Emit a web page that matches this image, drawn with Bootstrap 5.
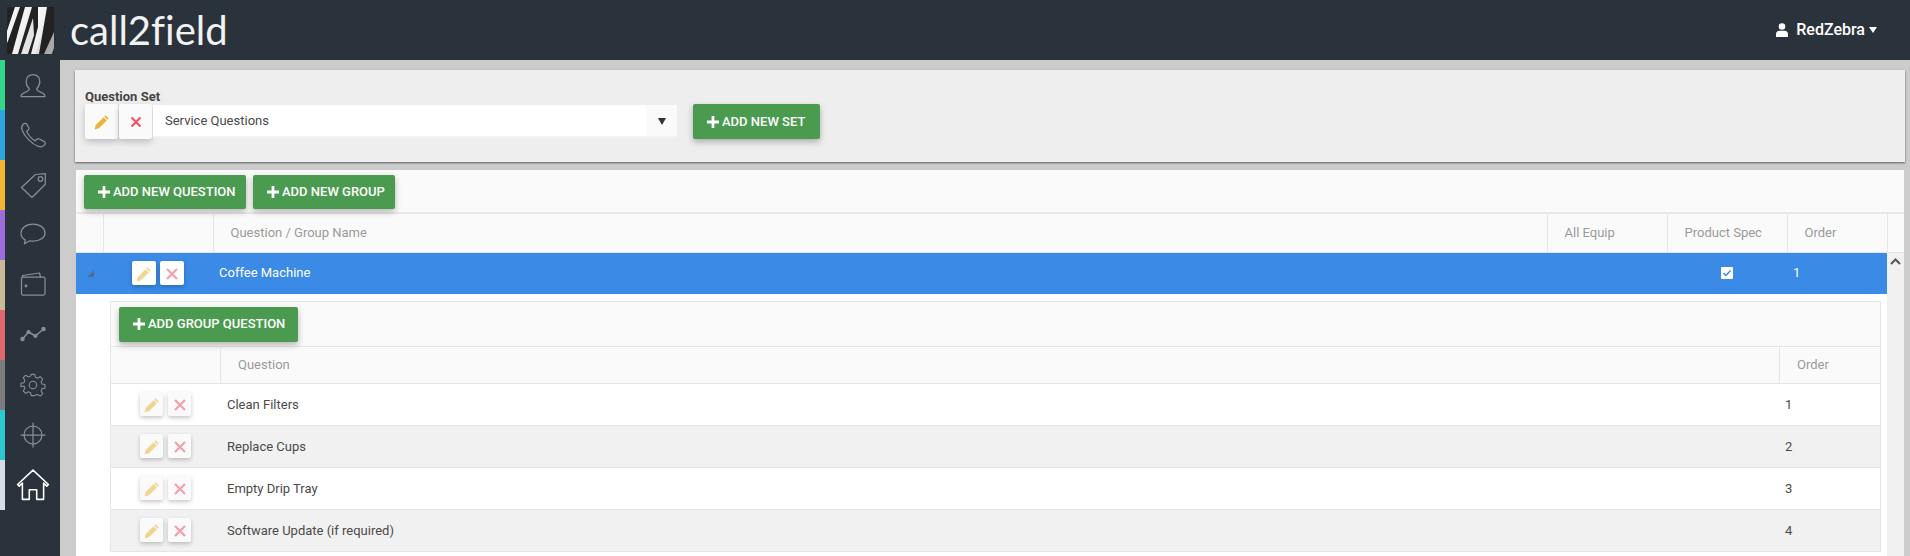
<!DOCTYPE html>
<html lang="en">
<head>
<meta charset="utf-8">
<title>call2field</title>
<link href="https://cdn.jsdelivr.net/npm/bootstrap@5.3.0/dist/css/bootstrap.min.css" rel="stylesheet">
<style>
html,body{height:556px;overflow:hidden;}
body{background:#ccc;font-family:Roboto,"Liberation Sans",sans-serif;font-size:13px;color:#4a4a4a;}
.topbar{height:60px;background:#2a323b;padding-left:7px;padding-right:33px;}
.brandmark{width:47px;height:47px;display:block;}
.brandname{font-family:Lato,"Noto Sans",sans-serif;font-weight:400;font-size:40px;line-height:60px;color:#f2f2f2;margin-left:16px;font-variant-ligatures:none;}
.usermenu{color:#fff;font-size:16px;font-weight:500;}
.usermenu .tri{width:0;height:0;border-style:solid;border-width:6px 4px 0;border-color:#fff transparent transparent;margin-left:4px;}
.shell{height:496px;}
.sidenav{width:60px;background:#2a323b;flex:none;}
.sideitem{height:50px;border-left:5px solid;}
.sideitem svg{width:32px;height:32px;fill:none;stroke:#878e96;stroke-width:1.25;stroke-linejoin:round;stroke-linecap:round;}
.sideitem.current svg{width:34px;height:34px;stroke:#fff;stroke-width:1.5;}
.mainarea{padding:10px 5px 0 15px;min-width:0;}
.setpanel{height:92px;background:#eee;box-shadow:0 1px 2px rgba(0,0,0,.55);padding:19px 10px 0;margin-bottom:8px;}
.setlabel{font-size:13px;font-weight:700;line-height:15px;color:#444;}
.iconbtn{width:33px;height:35px;background:#fafafa;border:0;border-radius:2px;padding:0;box-shadow:0 3px 6px rgba(0,0,0,.2);margin-right:1px;}
.iconbtn svg{width:16px;height:16px;}
.setpick{width:524px;height:33px;background:#fff;border-bottom:2px solid #f2f2f2;margin-top:1px;font-size:13px;}
.setpick .val{padding:1px 0 0 12px;}
.setpick .arr{width:31px;background:#fafafa;padding-top:1px;}
.setpick .arr i{border-style:solid;border-width:7px 4px 0;border-color:#333 transparent transparent;}
.greenbtn{background:#4a9b4f;color:#fff;border:0;border-radius:2px;font-size:13px;font-weight:500;height:35px;padding:0 0 0 14px;text-align:left;box-shadow:0 3px 6px rgba(0,0,0,.28);white-space:nowrap;}
.greenbtn svg{width:12px;height:12px;fill:#fff;margin-right:3px;vertical-align:-2px;}
.btnset{width:127px;margin-left:16px;}
.btnquestion{width:162px;height:34px;}
.btngroup{width:142px;height:34px;}
.btngroupq{width:179px;}
.gridwrap{width:1828px;margin-left:1px;height:386px;background:#fff;overflow:hidden;}
.gridtools{height:44px;background:#fafafa;padding:5px 8px 0;gap:7px;border-bottom:2px solid #e8e8e8;}
table.datagrid{table-layout:fixed;border-collapse:collapse;width:100%;}
table.datagrid th{background:#fafafa;color:#9a9a9a;font-weight:400;font-size:13px;height:38px;padding:0 0 0 17px;border-right:1px solid #e6e6e6;border-bottom:1px solid #e6e6e6;}
table.datagrid th.nopad{padding:0;}
table.datagrid th:last-child{border-right:0;}
.gridbody{position:relative;height:303px;}
.bluerow{height:41px;background:#3a8ae6;color:#fff;width:1811px;}
.expander{width:27px;flex:none;}
.expander i{display:block;width:0;height:0;border-style:solid;border-width:0 0 7px 7px;border-color:transparent transparent #4f6f98 transparent;margin-left:11px;}
.rowbtns{gap:4px;}
.bluebtns{width:110px;padding-left:29px;}
.bluename{padding-left:6px;}
.minibtn{width:24px;height:24px;background:#fff;border:0;border-radius:2px;padding:0;box-shadow:0 2px 4px rgba(0,0,0,.22);}
.minibtn svg{width:16px;height:16px;opacity:.55;}
.subgrid .minibtn{background:#fafafa;width:23px;}
.subgrid .rowbtns{gap:5px;}
.scrolltrack{position:absolute;top:0;right:0;width:17px;height:303px;background:#f1f1f1;}
.scrolltrack svg{display:block;margin:5px auto 0;width:11px;height:7px;}
.subgrid{margin:7px 0 0 34px;width:1771px;border:1px solid #e6e6e6;border-bottom:0;}
.subtools{height:45px;background:#fafafa;padding:5px 8px 0;border-bottom:1px solid #e6e6e6;}
.subhead{height:37px;background:#fafafa;color:#9a9a9a;border-bottom:1px solid #e6e6e6;}
.subrow{height:42px;border-bottom:1px solid #e6e6e6;background:#fff;}
.subrow.alt{background:#f1f1f1;}
.subrow .colq,.subrow .colord{padding-top:1px;}
.colbtn{width:110px;padding-left:29px;flex:none;}
.subhead .colbtn{border-right:1px solid #e6e6e6;height:100%;}
.colq{flex:1 1 0;padding-left:6px;}
.subhead .colq{padding-left:17px;}
.colord{width:101px;flex:none;padding-left:6px;}
.subhead .colord{height:100%;border-left:1px solid #e6e6e6;padding-left:17px;}
.checkmini{width:12px;height:12px;background:#fff;border-radius:1px;}
.ordmain{width:100px;flex:none;padding-left:6px;}
.prodcell{width:120px;flex:none;}
</style>
</head>
<body>
<nav class="topbar d-flex align-items-center">
  <svg class="brandmark" viewBox="0 0 47 47" aria-label="logo">
    <defs><linearGradient id="zs" x1="0" y1="0" x2="1" y2="1"><stop offset="0" stop-color="#fff"/><stop offset=".6" stop-color="#eee"/><stop offset="1" stop-color="#9a9a9a"/></linearGradient></defs>
    <rect width="47" height="47" fill="#242122"/>
    <polygon points="8,0 13,0 1,34 0,36 0,24" fill="url(#zs)"/>
    <polygon points="18,0 25,0 11,47 5,47" fill="url(#zs)"/>
    <polygon points="26,11 27,28 21,47 14,47" fill="#e4e4e4"/>
    <polygon points="31,0 40,0 32,47 24,47 31,20" fill="url(#zs)"/>
    <polygon points="47,25 47,41 45,47 37,47" fill="#a9a9a9"/>
  </svg>
  <span class="brandname">call2field</span>
  <div class="usermenu ms-auto d-flex align-items-center">
    <svg width="12" height="14" viewBox="0 0 12 14" class="me-1" fill="#fff"><circle cx="6" cy="3.500" r="3.300"/><path d="M0 14v-3c0-2 1.500-3.300 3.200-3.300h5.600C10.500 7.700 12 9 12 11v3z"/></svg>
    <span class="ms-1">RedZebra</span><span class="tri d-inline-block"></span>
  </div>
</nav>
<div class="shell d-flex">
  <aside class="sidenav">
    <div class="sideitem d-flex align-items-center justify-content-center" style="border-color:#33d68b"><svg viewBox="0 0 32 32"><path d="M4 27.500c0-2.600 1.500-3.300 4-4.200 2.700-.9 4.300-1.700 4.300-3.600-2-1.800-3.100-4.200-3.100-7.200 0-4 2.700-7 6.800-7s6.800 3 6.800 7c0 3-1.100 5.400-3.100 7.200 0 1.900 1.600 2.700 4.300 3.600 2.500.9 4 1.600 4 4.200z"/></svg></div>
    <div class="sideitem d-flex align-items-center justify-content-center" style="border-color:#2ca5dc"><svg viewBox="0 0 32 32"><path d="M6 5.500c1.500-1.500 3-1.500 3.800-.2l2 3.200c.5.900.3 1.800-.6 2.500l-1.500 1.200c1 3.300 5.700 8.600 8.600 9.600l1.500-1.500c.8-.8 1.800-.9 2.600-.3l5 2.600c1.200.9 1.100 2.300-.1 3.500-1.700 1.700-3.700 2.100-6 1.300C15.200 25.200 7.500 17.500 5.200 11.200c-.8-2.400-1.100-3.800.8-5.700z"/></svg></div>
    <div class="sideitem d-flex align-items-center justify-content-center" style="border-color:#f2b632"><svg viewBox="0 0 32 32"><path d="M4.500 18.500 18.500 5.500l9.800-.8v10.600L15 28.500z"/><circle cx="23.500" cy="10" r="2.300"/></svg></div>
    <div class="sideitem d-flex align-items-center justify-content-center" style="border-color:#9c6ddb"><svg viewBox="0 0 32 32"><path d="M16 5C8.800 5 4 9 4 14.200c0 3.300 1.900 5.500 4.300 6.800l-.9 3.800 5.400-3c1 .2 2.100.3 3.200.3 7.200 0 12-3.700 12-7.900C28 9 23.200 5 16 5z"/></svg></div>
    <div class="sideitem d-flex align-items-center justify-content-center" style="border-color:#c9bb96"><svg viewBox="0 0 32 32"><path d="M5.500 8v-1.500l17-2.500 1 4"/><rect x="4.500" y="8" width="23.500" height="18" rx="1.500"/><circle cx="9" cy="17" r=".8" fill="#878e96"/></svg></div>
    <div class="sideitem d-flex align-items-center justify-content-center" style="border-color:#e0666f"><svg viewBox="0 0 32 32" style="stroke-width:1.500"><path d="M5.500 20 11.500 13 18.500 17 26.500 10"/><g fill="#878e96"><circle cx="5.500" cy="20" r="1.500"/><circle cx="11.500" cy="13" r="1.300"/><circle cx="18.500" cy="17" r="1.300"/><circle cx="26.500" cy="10" r="1.500"/></g></svg></div>
    <div class="sideitem d-flex align-items-center justify-content-center" style="border-color:#7d7d7d"><svg viewBox="-2 -2 36 36"><path d="M14 4h4l.7 3.400 2.500 1 3-1.900 2.800 2.800-1.900 3 1 2.500 3.400.7v4l-3.400.7-1 2.500 1.900 3-2.800 2.800-3-1.900-2.500 1L18 28h-4l-.7-3.400-2.500-1-3 1.900-2.800-2.800 1.900-3-1-2.500L2.500 18v-4l3.400-.7 1-2.500-1.900-3 2.800-2.800 3 1.900 2.500-1z"/><circle cx="16" cy="16" r="4.200"/></svg></div>
    <div class="sideitem d-flex align-items-center justify-content-center" style="border-color:#2bc8d2"><svg viewBox="0 0 32 32"><circle cx="16" cy="16" r="9"/><path d="M16 4v24M4 16h24"/></svg></div>
    <div class="sideitem current d-flex align-items-center justify-content-center" style="border-color:#d5dde5"><svg viewBox="0 0 32 32"><path d="M1.500 15.500 16 2l14.500 13.500-1.500 1.500L26 14.200V29.500h-6.500v-9h-7v9H6V14.200L3 17z"/></svg></div>
  </aside>
  <main class="mainarea flex-grow-1">
    <section class="setpanel">
      <div class="setlabel">Question Set</div>
      <div class="d-flex align-items-start">
        <button class="iconbtn" aria-label="Edit"><svg viewBox="0 0 16 16"><path fill="#e9b63d" d="M11.600 1.200l3.200 3.200-1.300 1.300-3.200-3.200zM9.600 3.200l3.200 3.200-7.900 7.900L.6 15.400l1.100-4.300z"/></svg></button>
        <button class="iconbtn" aria-label="Delete"><svg viewBox="0 0 16 16"><path fill="none" stroke="#e85a6e" stroke-width="2.400" d="M3.500 3.500l9 9M12.500 3.500l-9 9"/></svg></button>
        <div class="setpick d-flex align-items-stretch"><div class="val flex-grow-1 d-flex align-items-center">Service Questions</div><div class="arr d-flex align-items-center justify-content-center"><i class="d-block"></i></div></div>
        <button class="greenbtn btnset"><svg viewBox="0 0 13 13"><path d="M5 0h3v5h5v3H8v5H5V8H0V5h5z"/></svg>ADD NEW SET</button>
      </div>
    </section>
    <section class="gridwrap">
      <div class="gridtools d-flex">
        <button class="greenbtn btnquestion"><svg viewBox="0 0 13 13"><path d="M5 0h3v5h5v3H8v5H5V8H0V5h5z"/></svg>ADD NEW QUESTION</button>
        <button class="greenbtn btngroup"><svg viewBox="0 0 13 13"><path d="M5 0h3v5h5v3H8v5H5V8H0V5h5z"/></svg>ADD NEW GROUP</button>
      </div>
      <table class="datagrid">
        <colgroup><col style="width:27px"><col style="width:110px"><col><col style="width:120px"><col style="width:120px"><col style="width:100px"><col style="width:17px"></colgroup>
        <thead><tr><th class="nopad"></th><th class="nopad"></th><th>Question / Group Name</th><th>All Equip</th><th>Product Spec</th><th>Order</th><th class="nopad"></th></tr></thead>
      </table>
      <div class="gridbody">
        <div class="bluerow d-flex align-items-center">
          <div class="expander"><i></i></div>
          <div class="rowbtns bluebtns d-flex"><button class="minibtn" aria-label="Edit"><svg viewBox="0 0 16 16"><path fill="#e9b63d" d="M11.600 1.200l3.200 3.200-1.300 1.300-3.200-3.200zM9.600 3.200l3.200 3.200-7.900 7.900L.6 15.400l1.100-4.300z"/></svg></button><button class="minibtn" aria-label="Delete"><svg viewBox="0 0 16 16"><path fill="none" stroke="#e85a6e" stroke-width="2.300" d="M3 3l10 10M13 3L3 13"/></svg></button></div>
          <div class="bluename flex-grow-1">Coffee Machine</div>
          <div class="prodcell d-flex justify-content-center"><span class="checkmini d-flex align-items-center justify-content-center"><svg width="10" height="10" viewBox="0 0 10 10"><path fill="none" stroke="#3a8ae6" stroke-width="1.500" d="M1.500 5l2.500 2.500L8.500 2.500"/></svg></span></div>
          <div class="ordmain">1</div>
        </div>
        <div class="scrolltrack"><svg viewBox="0 0 11 7"><path fill="none" stroke="#555" stroke-width="2" d="M1 6l4.500-4.500L10 6"/></svg></div>
        <div class="subgrid">
          <div class="subtools"><button class="greenbtn btngroupq"><svg viewBox="0 0 13 13"><path d="M5 0h3v5h5v3H8v5H5V8H0V5h5z"/></svg>ADD GROUP QUESTION</button></div>
          <div class="subhead d-flex align-items-center"><div class="colbtn"></div><div class="colq">Question</div><div class="colord d-flex align-items-center">Order</div></div>
          <div class="subrow d-flex align-items-center"><div class="colbtn rowbtns d-flex"><button class="minibtn" aria-label="Edit"><svg viewBox="0 0 16 16"><path fill="#e9b63d" d="M11.600 1.200l3.200 3.200-1.300 1.300-3.200-3.200zM9.600 3.200l3.200 3.200-7.900 7.900L.6 15.400l1.100-4.300z"/></svg></button><button class="minibtn" aria-label="Delete"><svg viewBox="0 0 16 16"><path fill="none" stroke="#e85a6e" stroke-width="2.300" d="M3 3l10 10M13 3L3 13"/></svg></button></div><div class="colq">Clean Filters</div><div class="colord">1</div></div>
          <div class="subrow alt d-flex align-items-center"><div class="colbtn rowbtns d-flex"><button class="minibtn" aria-label="Edit"><svg viewBox="0 0 16 16"><path fill="#e9b63d" d="M11.600 1.200l3.200 3.200-1.300 1.300-3.200-3.200zM9.600 3.200l3.200 3.200-7.900 7.900L.6 15.400l1.100-4.300z"/></svg></button><button class="minibtn" aria-label="Delete"><svg viewBox="0 0 16 16"><path fill="none" stroke="#e85a6e" stroke-width="2.300" d="M3 3l10 10M13 3L3 13"/></svg></button></div><div class="colq">Replace Cups</div><div class="colord">2</div></div>
          <div class="subrow d-flex align-items-center"><div class="colbtn rowbtns d-flex"><button class="minibtn" aria-label="Edit"><svg viewBox="0 0 16 16"><path fill="#e9b63d" d="M11.600 1.200l3.200 3.200-1.300 1.300-3.200-3.200zM9.600 3.200l3.200 3.200-7.900 7.900L.6 15.400l1.100-4.300z"/></svg></button><button class="minibtn" aria-label="Delete"><svg viewBox="0 0 16 16"><path fill="none" stroke="#e85a6e" stroke-width="2.300" d="M3 3l10 10M13 3L3 13"/></svg></button></div><div class="colq">Empty Drip Tray</div><div class="colord">3</div></div>
          <div class="subrow alt d-flex align-items-center"><div class="colbtn rowbtns d-flex"><button class="minibtn" aria-label="Edit"><svg viewBox="0 0 16 16"><path fill="#e9b63d" d="M11.600 1.200l3.200 3.200-1.300 1.300-3.200-3.200zM9.600 3.200l3.200 3.200-7.900 7.900L.6 15.400l1.100-4.300z"/></svg></button><button class="minibtn" aria-label="Delete"><svg viewBox="0 0 16 16"><path fill="none" stroke="#e85a6e" stroke-width="2.300" d="M3 3l10 10M13 3L3 13"/></svg></button></div><div class="colq">Software Update (if required)</div><div class="colord">4</div></div>
        </div>
      </div>
    </section>
  </main>
</div>
</body>
</html>
